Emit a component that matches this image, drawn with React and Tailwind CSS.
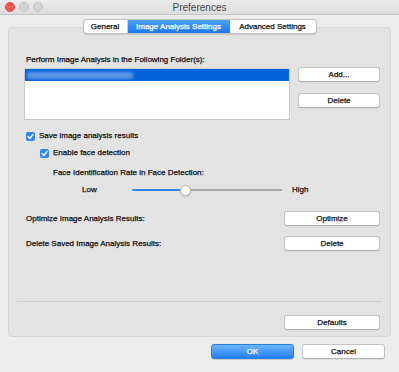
import React from "react";

function Check() {
  return (
    <svg width="9" height="9" viewBox="0 0 9 9" className="block">
      <rect x="0" y="0" width="9" height="9" rx="2" fill="#2f86f5" />
      <polyline points="2,4.6 3.8,6.5 7,2.4" fill="none" stroke="#fff" strokeWidth="1.4" strokeLinecap="round" strokeLinejoin="round" />
    </svg>
  );
}

function Btn({ children, w }) {
  return (
    <div
      className={`${w} h-[15px] flex items-center justify-center bg-white border border-[#c3c3c3] border-b-[#b0b0b0] rounded-[3px] shadow-[0_0.5px_0.5px_rgba(0,0,0,0.12)] text-[8px] text-[#111]`}
    >
      {children}
    </div>
  );
}

export default function App() {
  return (
    <div className="w-[399px] h-[372px] bg-[#ececec] flex flex-col font-['Liberation_Sans',Arial,sans-serif] text-[8px] leading-[10px] text-[#111] [-webkit-text-stroke-width:0.25px] overflow-hidden">
      {/* title bar */}
      <div className="h-[15px] grid grid-cols-[60px_1fr_60px] items-center bg-gradient-to-b from-[#ebebeb] to-[#dcdcdc] border-b border-[#c6c6c6]">
        <div className="flex items-center gap-[4px] pl-[5px]">
          <div className="w-[10px] h-[10px] rounded-full bg-[#fc5a55] border border-[#e0443e]" />
          <div className="w-[10px] h-[10px] rounded-full bg-[#d3d3d3] border border-[#c2c2c2]" />
          <div className="w-[10px] h-[10px] rounded-full bg-[#d3d3d3] border border-[#c2c2c2]" />
        </div>
        <div className="text-center text-[10px] leading-[12px] text-[#4a4a4a] mt-[1px] [-webkit-text-stroke-width:0px]">Preferences</div>
        <div />
      </div>

      {/* body */}
      <div className="flex-1 flex flex-col px-[8px] pt-[4px]">
        {/* tabs */}
        <div className="relative z-10 flex justify-center">
          <div className="flex h-[15px] bg-white border border-[#c2c2c2] rounded-[4px] shadow-[0_0.5px_1px_rgba(0,0,0,0.12)] overflow-hidden">
            <div className="w-[44px] flex items-center justify-center border-r border-[#cfcfcf]">General</div>
            <div className="w-[102px] flex items-center justify-center bg-gradient-to-b from-[#4ca2fb] to-[#1d75ef] text-white">
              Image Analysis Settings
            </div>
            <div className="w-[86px] flex items-center justify-center">Advanced Settings</div>
          </div>
        </div>

        {/* group box */}
        <div className="-mt-[7px] h-[310px] bg-[#e3e3e3] border border-[#d6d6d6] rounded-[4px] flex flex-col pl-[16px] pr-[10px] pt-[27px] pb-[6px]">
          <div className="ml-[1px]">Perform Image Analysis in the Following Folder(s):</div>

          <div className="mt-[3px] flex justify-between">
            <div className="-ml-[1px] w-[266px] h-[52px] bg-white border border-[#c9c9c9]">
              <div className="h-[12px] bg-[#0564dc] flex items-center pl-[2px]">
                <div className="w-[106px] h-[7px] bg-[#5a96e6] blur-[1.5px] rounded-[2px]" />
              </div>
            </div>
            <div className="flex flex-col gap-[11px] -mt-[1px]">
              <Btn w="w-[82px]">Add...</Btn>
              <Btn w="w-[82px]">Delete</Btn>
            </div>
          </div>

          <div className="mt-[11px] flex items-center gap-[4px] ml-[1px]">
            <Check />
            <span>Save image analysis results</span>
          </div>
          <div className="mt-[7px] flex items-center gap-[4px] ml-[15px]">
            <Check />
            <span>Enable face detection</span>
          </div>

          <div className="mt-[10px] ml-[28px]">Face Identification Rate in Face Detection:</div>

          <div className="mt-[6px] h-[12px] flex items-center ml-[57px]">
            <span className="w-[15px]">Low</span>
            <div className="ml-[35px] w-[150px] h-[12px] relative flex items-center">
              <div className="h-[2px] w-[54px] bg-[#2d87f5] rounded-l-full" />
              <div className="h-[2px] flex-1 bg-[#a9a9a9] rounded-r-full" />
              <div className="absolute left-[48px] top-[0.5px] w-[11px] h-[11px] rounded-full bg-white border border-[#b8b8b8] shadow-[0_0.5px_1px_rgba(0,0,0,0.25)]" />
            </div>
            <span className="ml-[10px]">High</span>
          </div>

          <div className="mt-[15px] flex items-center justify-between">
            <span className="ml-[1px]">Optimize Image Analysis Results:</span>
            <Btn w="w-[96px]">Optimize</Btn>
          </div>
          <div className="mt-[10px] flex items-center justify-between">
            <span className="ml-[1px]">Delete Saved Image Analysis Results:</span>
            <Btn w="w-[96px]">Delete</Btn>
          </div>

          <div className="mt-auto -ml-[8px] -mr-[2px] h-px bg-[#cdcdcd]" />
          <div className="mt-[13px] flex justify-end">
            <Btn w="w-[96px]">Defaults</Btn>
          </div>
        </div>

        {/* footer */}
        <div className="mt-[7px] flex justify-end gap-[8px] pr-[6px]">
          <div className="w-[83px] h-[15px] flex items-center justify-center rounded-[3px] bg-gradient-to-b from-[#6ab3fb] to-[#1f7ff5] border border-[#2a7fe6] text-white shadow-[0_0.5px_1px_rgba(0,0,0,0.15)]">
            OK
          </div>
          <Btn w="w-[83px]">Cancel</Btn>
        </div>
      </div>
    </div>
  );
}
